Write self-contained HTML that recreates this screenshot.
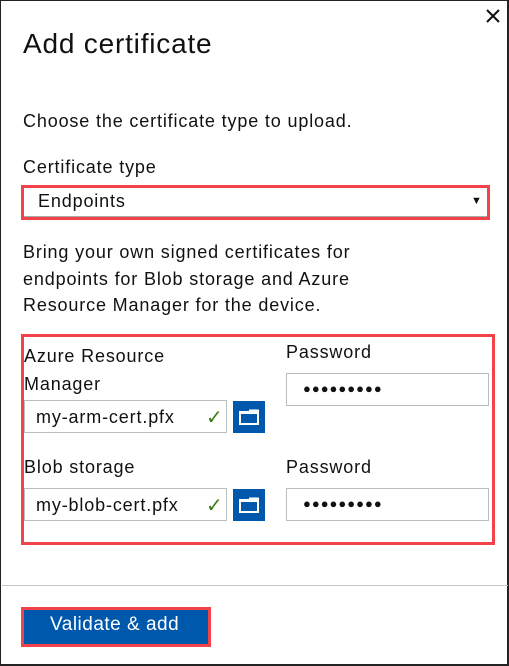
<!DOCTYPE html>
<html><head><style>
html,body{margin:0;padding:0;width:509px;height:666px;overflow:hidden;background:#fff}
body{position:relative;font-family:"Liberation Sans",sans-serif;color:#111;box-sizing:border-box;border:1px solid #222;border-right:2px solid #222;border-bottom:2px solid #222}
.a{position:absolute;white-space:nowrap}
.t{font-size:18px;letter-spacing:0.85px}
.inp{position:absolute;border:1px solid #bdbdbd;background:#fff;box-sizing:border-box}
.red{position:absolute;border:3px solid #f2434a;box-sizing:border-box}
.fb{position:absolute;width:32px;height:32px;background:#0058ad}
.dots{position:absolute;left:16px;top:7px;font-size:13px;letter-spacing:1px;font-weight:bold}
</style></head><body>
<svg style="position:absolute;left:484px;top:7px" width="16" height="16"><path d="M2 2L14 14M14 2L2 14" stroke="#111" stroke-width="2"/></svg>
<div class="a" style="left:22px;top:27px;font-size:28px;letter-spacing:0.8px">Add certificate</div>
<div class="a t" style="left:22px;top:110px">Choose the certificate type to upload.</div>
<div class="a t" style="left:22px;top:156px">Certificate type</div>
<div class="red" style="left:20px;top:184px;width:469px;height:35px"></div>
<div style="position:absolute;left:23px;top:215px;width:463px;height:1px;background:#aaa"></div>
<div class="a t" style="left:37px;top:190px">Endpoints</div>
<div class="a" style="left:470px;top:194px;font-size:11px">▼</div>
<div class="a t" style="left:22px;top:238px;line-height:26.5px">Bring your own signed certificates for<br>endpoints for Blob storage and Azure<br>Resource Manager for the device.</div>
<div class="red" style="left:20px;top:333px;width:474px;height:211px"></div>
<div class="a t" style="left:23px;top:341px;line-height:28px">Azure Resource<br>Manager</div>
<div class="a t" style="left:285px;top:341px">Password</div>
<div class="inp" style="left:23px;top:399px;width:203px;height:33px"><span class="a t" style="left:11px;top:6px">my-arm-cert.pfx</span><span class="a" style="left:181px;top:4px;color:#3a7d1b;font-size:20px">✓</span></div>
<div class="fb" style="left:232px;top:400px"><svg width="32" height="32"><rect x="7" y="11" width="18" height="12" fill="none" stroke="#fff" stroke-width="2"/><path d="M7 12h18M16 9.5h9v2" stroke="#fff" stroke-width="2" fill="none"/></svg></div>
<div class="inp" style="left:285px;top:372px;width:203px;height:33px"><span class="dots">●●●●●●●●●</span></div>
<div class="a t" style="left:23px;top:456px">Blob storage</div>
<div class="a t" style="left:285px;top:456px">Password</div>
<div class="inp" style="left:23px;top:487px;width:203px;height:33px"><span class="a t" style="left:11px;top:6px">my-blob-cert.pfx</span><span class="a" style="left:181px;top:4px;color:#3a7d1b;font-size:20px">✓</span></div>
<div class="fb" style="left:232px;top:488px"><svg width="32" height="32"><rect x="7" y="11" width="18" height="12" fill="none" stroke="#fff" stroke-width="2"/><path d="M7 12h18M16 9.5h9v2" stroke="#fff" stroke-width="2" fill="none"/></svg></div>
<div class="inp" style="left:285px;top:487px;width:203px;height:33px"><span class="dots">●●●●●●●●●</span></div>
<div style="position:absolute;left:1px;top:584px;width:506px;height:1px;background:#c8c8c8"></div>
<div class="red" style="left:20px;top:606px;width:190px;height:40px;background:#0058ad"></div>
<div class="a" style="left:49px;top:613px;font-size:19px;letter-spacing:0.5px;color:#fff">Validate &amp; add</div>
</body></html>
